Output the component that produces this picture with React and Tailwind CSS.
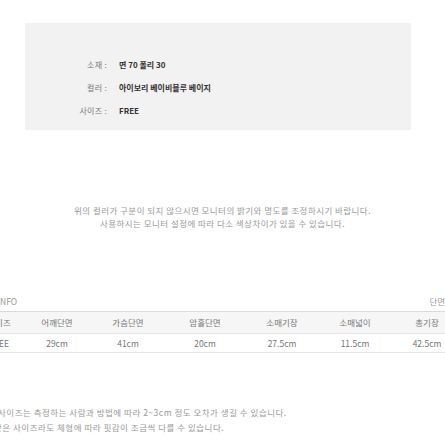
const FONT = { fontFamily: '"Noto Sans CJK KR", "Noto Sans", sans-serif' };

const SPECS = [
  { label: "소재", value: "면 70 폴리 30" },
  { label: "컬러", value: "아이보리 베이비블루 베이지" },
  { label: "사이즈", value: "FREE" },
];

const HEAD = ["사이즈", "어깨단면", "가슴단면", "암홀단면", "소매기장", "소매넓이", "총기장"];
const ROW = ["FREE", "29cm", "41cm", "20cm", "27.5cm", "11.5cm", "42.5cm"];

export default function App() {
  return (
    <div className="w-[445px] h-[445px] overflow-hidden bg-white" style={FONT}>
      <div className="pt-[23px] pl-[25px]">
        <div className="w-[386px] h-[107px] bg-[#f2f2f2] pt-[30px]">
          {SPECS.map((s) => (
            <div key={s.label} className="flex items-center h-[23px] text-[8px]">
              <div className="w-[82px] text-right text-[#777] tracking-[0.3px]">{s.label} :</div>
              <div className="pl-[12px] font-semibold text-[#333]">{s.value}</div>
            </div>
          ))}
        </div>
      </div>

      <div className="mt-[74px] text-center text-[8.5px] leading-[13px] text-[#999] tracking-[0.45px]">
        <p>위의 컬러가 구분이 되지 않으시면 모니터의 밝기와 명도를 조정하시기 바랍니다.</p>
        <p>사용하시는 모니터 설정에 따라 다소 색상차이가 있을 수 있습니다.</p>
      </div>

      <div className="mt-[65px] flex justify-between items-center h-[12px] text-[8.5px] text-[#999] -ml-[22px] -mr-[18px]">
        <span>SIZE INFO</span>
        <span>단면(cm)</span>
      </div>

      <div className="mt-[4px] -ml-[26px] w-[490px] text-[8.5px] text-[#777]">
        <div className="grid grid-cols-[50px_66px_76px_78px_76px_70px_74px] h-[22px] items-center bg-[#f6f6f6] border-t border-[#d9d9d9] text-center">
          {HEAD.map((h) => (
            <div key={h}>{h}</div>
          ))}
        </div>
        <div className="grid grid-cols-[50px_66px_76px_78px_76px_70px_74px] h-[20px] items-center border-t border-b border-[#e6e6e6] text-center">
          {ROW.map((v, i) => (
            <div key={i}>{v}</div>
          ))}
        </div>
      </div>

      <div className="mt-[52px] text-[8.5px] leading-[15px] text-[#999] tracking-[0.5px]">
        <p className="-ml-[2px]">사이즈는 측정하는 사람과 방법에 따라 2~3cm 정도 오차가 생길 수 있습니다.</p>
        <p className="-ml-[6px]">같은 사이즈라도 체형에 따라 핏감이 조금씩 다를 수 있습니다.</p>
      </div>
    </div>
  );
}
